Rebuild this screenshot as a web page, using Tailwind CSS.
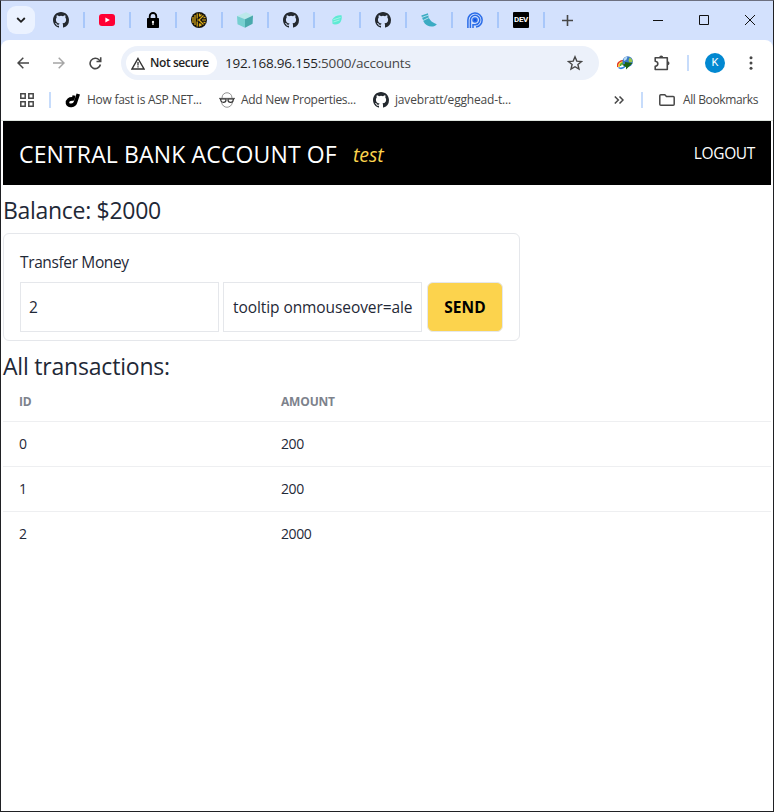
<!DOCTYPE html>
<html lang="en">
<head>
<meta charset="utf-8">
<title>Accounts</title>
<script src="https://cdn.jsdelivr.net/npm/@tailwindcss/browser@4"></script>
</head>
<body class="w-[774px] h-[812px] overflow-hidden bg-[#d3e1fd] font-['Open_Sans',sans-serif] text-[#1f2937]">
<svg class="hidden">
  <symbol id="github" viewBox="0 0 16 16"><path fill="#24292f" d="M8 0C3.58 0 0 3.58 0 8c0 3.54 2.29 6.53 5.47 7.59.4.07.55-.17.55-.38 0-.19-.01-.82-.01-1.49-2.01.37-2.53-.49-2.69-.94-.09-.23-.48-.94-.82-1.13-.28-.15-.68-.52-.01-.53.63-.01 1.08.58 1.23.82.72 1.21 1.87.87 2.33.66.07-.52.28-.87.51-1.07-1.78-.2-3.64-.89-3.64-3.95 0-.87.31-1.59.82-2.15-.08-.2-.36-1.02.08-2.12 0 0 .67-.21 2.2.82a7.6 7.6 0 0 1 4 0c1.53-1.04 2.2-.82 2.2-.82.44 1.1.16 1.92.08 2.12.51.56.82 1.27.82 2.15 0 3.07-1.87 3.75-3.65 3.95.29.25.54.73.54 1.48 0 1.07-.01 1.93-.01 2.2 0 .21.15.46.55.38A8.01 8.01 0 0 0 16 8c0-4.42-3.58-8-8-8z"/></symbol>
</svg>
<div class="flex h-full flex-col border border-[#202124] border-t-[#6d7080]">
  <!-- tab strip -->
  <div class="flex h-[39px] shrink-0 items-center pb-[1px] pl-[6px]">
    <div class="flex h-7 w-7 items-center justify-center rounded-[9px] bg-[#ebf2ff]"><svg class="h-[10px] w-[10px]" viewBox="0 0 10 10" fill="none" stroke="#1f1f1f" stroke-width="1.8"><path d="M1.2 3 5 6.8 8.8 3"/></svg></div>
    <div class="ml-[18px] w-[30px]"><svg class="h-4 w-4"><use href="#github"/></svg></div>
    <div class="flex items-center">
      <div class="flex w-[46px] items-center"><i class="h-4 w-[2px] bg-[#a8c7fa]"></i><svg class="ml-[14px] h-4 w-4" viewBox="0 0 16 16"><rect y="2" width="16" height="12" rx="3" fill="#f03"/><path d="M6.4 5.4v5.2L10.8 8z" fill="#fff"/></svg></div>
      <div class="flex w-[46px] items-center"><i class="h-4 w-[2px] bg-[#a8c7fa]"></i><svg class="ml-[14px] h-4 w-4" viewBox="0 0 16 16"><path d="M4.700 7V4.300a3.300 3.300 0 0 1 6.600 0V7" fill="none" stroke="#000" stroke-width="1.8"/><rect x="2" y="6" width="12" height="10" rx=".8"/><path d="M8 8.800a1.200 1.200 0 0 1 .6 2.200v2H7.400v-2A1.200 1.200 0 0 1 8 8.800z" fill="#fff"/></svg></div>
      <div class="flex w-[46px] items-center"><i class="h-4 w-[2px] bg-[#a8c7fa]"></i><svg class="ml-[14px] h-4 w-4" viewBox="0 0 16 16"><circle cx="8" cy="8" r="8" fill="#15130d"/><g fill="none" stroke="#dcab18" stroke-width="1.200"><path d="M2 5v6M4 3v10M6.200 1.500v5M6.200 9.500v5M6 8h2l4.500-4.500M8 8l4.500 4.500M8.500 4.500V1.500M8.500 4.500l2-2M8.500 11.500v3M8.500 11.500l2 2M11 8h4M12.500 6l2-1M12.500 10l2 1"/></g></svg></div>
      <div class="flex w-[46px] items-center"><i class="h-4 w-[2px] bg-[#a8c7fa]"></i><svg class="ml-[14px] h-4 w-4" viewBox="0 0 16 16"><path d="M0 4 9 .3l7 3.200-8 3.800z" fill="#bce9ea"/><path d="M0 4l8 3.300v8.500l-7.500-3.500z" fill="#76cfd0"/><path d="M16 3.500 8 7.300v8.500l7.600-4z" fill="#48a9ab"/></svg></div>
      <div class="flex w-[46px] items-center"><i class="h-4 w-[2px] bg-[#a8c7fa]"></i><svg class="ml-[14px] h-4 w-4"><use href="#github"/></svg></div>
      <div class="flex w-[46px] items-center"><i class="h-4 w-[2px] bg-[#a8c7fa]"></i><svg class="ml-[14px] h-4 w-4" viewBox="0 0 16 16"><path d="M3.300 7.500C5 4 9 2.800 12.500 3.200c.6 2.500.3 6-2.500 8.300-2 1-5 1.300-6.500.3z" fill="#5eead4"/><path d="M4.300 7.700 11.500 5.500M4.500 10l6-2" stroke="#b7f5ea" stroke-width=".8"/></svg></div>
      <div class="flex w-[46px] items-center"><i class="h-4 w-[2px] bg-[#a8c7fa]"></i><svg class="ml-[14px] h-4 w-4"><use href="#github"/></svg></div>
      <div class="flex w-[46px] items-center"><i class="h-4 w-[2px] bg-[#a8c7fa]"></i><svg class="ml-[14px] h-4 w-4" viewBox="0 0 16 16"><path d="M.3 3.500 7 1.300c.2 5 2.500 9 8.800 10.900C13.500 16 5 15.500 2.500 9.500z" fill="#3babc3"/><path d="M.8 5.500 7.200 3.200M2 8.500l5.800-2.800" stroke="#c0e2f2" stroke-width=".9"/></svg></div>
      <div class="flex w-[46px] items-center"><i class="h-4 w-[2px] bg-[#a8c7fa]"></i><svg class="ml-[14px] h-4 w-4" viewBox="0 0 16 16" fill="none" stroke="#2b6de8" stroke-width="1.500"><path d="M.9 16V8A7.100 7.100 0 1 1 9 15.100M3.400 16V8A4.700 4.700 0 1 1 8 12.700H6V16"/><circle cx="8" cy="8" r="2" fill="#1554e0"/></svg></div>
      <div class="flex w-[46px] items-center"><i class="h-4 w-[2px] bg-[#a8c7fa]"></i><span class="ml-[14px] flex h-4 w-4 items-center justify-center rounded-[1px] bg-black font-['Roboto',sans-serif] text-[8px] font-bold tracking-[-0.300px] text-white">DEV</span></div>
      <div class="flex w-[46px] items-center"><i class="h-4 w-[2px] bg-[#a8c7fa]"></i><svg class="ml-[17px] h-[11px] w-[11px]" viewBox="0 0 11 11" stroke="#474747" stroke-width="1.600"><path d="M5.500 0v11M0 5.500h11"/></svg></div>
    </div>
    <div class="ml-[64px] flex items-center gap-9">
      <svg class="h-[10px] w-[10px]" viewBox="0 0 10 10"><path d="M0 5.500h10" stroke="#111"/></svg>
      <svg class="h-[10px] w-[10px]" viewBox="0 0 10 10"><path d="M.5.5h9v9h-9z" fill="none" stroke="#111"/></svg>
      <svg class="h-[10px] w-[10px]" viewBox="0 0 10 10"><path d="M0 0l10 10M10 0 0 10" stroke="#111"/></svg>
    </div>
  </div>
  <div class="flex min-h-0 flex-1 flex-col rounded-t-[8px] bg-white">
    <!-- address bar -->
    <div class="flex h-[46px] shrink-0 items-center pl-[16px]">
      <svg class="h-3 w-3" viewBox="0 0 12 12" fill="none" stroke="#474747" stroke-width="1.500"><path d="M12 6H1M6.300.7 1 6l5.300 5.300"/></svg>
      <svg class="ml-6 h-3 w-3" viewBox="0 0 12 12" fill="none" stroke="#a5a5a5" stroke-width="1.500"><path d="M0 6h11M5.700.7 11 6l-5.300 5.300"/></svg>
      <svg class="ml-6 h-[13px] w-[13px]" viewBox="0 0 13 13" fill="none" stroke="#474747" stroke-width="1.600"><path d="M11.400 7.500A5.200 5.200 0 1 1 10.200 3L11.500 4.300"/><path d="M11.700.3v4.200H7.500"/></svg>
      <div class="ml-[19px] flex h-[34px] w-[478px] items-center rounded-full bg-[#ecf1fa] pl-[5px]">
        <div class="flex h-6 w-[91px] items-center rounded-full bg-white pl-[5px]">
          <svg class="h-[13px] w-[14px] shrink-0" viewBox="0 0 14 13"><path d="M7 1.500 13 12H1z" fill="none" stroke="#333" stroke-width="1.400"/><path d="M7 5v3.500M7 9.200v1.400" stroke="#333" stroke-width="1.300"/></svg>
          <span class="ml-[5px] whitespace-nowrap text-[12px] font-semibold tracking-[-0.420px] text-[#1f1f1f]">Not secure</span>
        </div>
        <span class="ml-[8px] whitespace-nowrap text-[13.500px] tracking-[-0.200px] text-[#1f1f1f]">192.168.96.155<span class="text-[#474747]">:5000/accounts</span></span>
        <svg class="mr-[16px] ml-auto h-4 w-4" viewBox="0 0 16 16"><path d="M8 1.800l1.800 4.300 4.700.4-3.600 3 1.100 4.600L8 11.700l-4 2.400 1.100-4.600-3.600-3 4.700-.4z" fill="none" stroke="#474747" stroke-width="1.400"/></svg>
      </div>
      <svg class="ml-[18px] h-4 w-4" viewBox="0 0 16 16"><path d="M.8 12C-.2 8 3 5.500 7 5.500" fill="none" stroke="#e43c22" stroke-width="1.600"/><path d="M2.200 12C1.500 9 4 7 7 7" fill="none" stroke="#f6c626" stroke-width="1.600"/><path d="M1.500 12.500c2 1.500 5 .5 7-1.500" fill="none" stroke="#2681dd" stroke-width="1.500"/><path d="M3.500 11C3.500 9 5 8 7 8" fill="none" stroke="#4caf35" stroke-width="1.500"/><circle cx="10.700" cy="6.500" r="5.200" fill="#3a79c7"/><path d="M6.500 5c.5-2.500 2.500-3.500 4-3.200L9.500 4.500l-2 1.500z" fill="#b9dcf5"/><path d="M12.500 2.500c2 .5 3 2.500 3 4.500l-3 .5-1-2z" fill="#9bc84c"/><path d="M4.500 9.500 8 9V7l7.500 1L9 14.500V12z" fill="#1d6415"/></svg>
      <svg class="ml-[21px] h-4 w-4" viewBox="0 0 16 16"><path d="M1.200 2.800h12.100v11.700H1.200v-3.300c3.500-.5 3.500-4.500 0-5z" fill="none" stroke="#474747" stroke-width="1.600" stroke-linejoin="round"/><path d="M5.200 2.500a2 2 0 0 1 4 0zM13.500 6.300a2 2 0 0 1 0 4z" fill="#474747"/></svg>
      <i class="ml-[17px] h-4 w-[2px] bg-[#c7dcfb]"></i>
      <span class="ml-[16px] flex h-5 w-5 items-center justify-center rounded-full bg-[#0288d1] font-['Roboto',sans-serif] text-[11px] text-white">K</span>
      <svg class="ml-[24px] h-[14px] w-1" viewBox="0 0 4 14" fill="#474747"><circle cx="2" cy="1.700" r="1.500"/><circle cx="2" cy="7" r="1.500"/><circle cx="2" cy="12.300" r="1.500"/></svg>
    </div>
    <!-- bookmarks bar -->
    <div class="flex h-[35px] shrink-0 items-center border-b border-[#dfe5df] pb-[6px] pl-[19px] text-[12px] text-[#474747]">
      <svg class="h-[14px] w-[14px]" viewBox="0 0 14 14" fill="none" stroke="#474747" stroke-width="1.500"><path d="M.8.8h4.400v4.400H.8zM8.800.8h4.400v4.400H8.800zM.8 8.800h4.400v4.400H.8zM8.800 8.800h4.400v4.400H8.800z"/></svg>
      <i class="ml-[15px] h-4 w-[2px] bg-[#c7dcfb]"></i>
      <svg class="ml-[14px] h-4 w-4" viewBox="0 0 16 16" fill="none" stroke="#000"><path d="M9 3.500 7.800 8.500" stroke-width="3"/><path d="M13.300 2 10.500 10.200C9.500 14 3.500 14.500 2.500 11.300 2 8.500 4.500 6.500 8 7" stroke-width="3.600"/></svg>
      <span class="ml-[6px] w-[116px] whitespace-nowrap tracking-[-0.270px]">How fast is ASP.NET...</span>
      <svg class="ml-[16px] h-4 w-4" viewBox="0 0 16 16" fill="none" stroke="#777"><path d="M3 6C3-1 13-1 13 6M2.500 10c1 7 10 7 11 0" stroke-width=".8"/><path d="M0 6.500h16" stroke-width="1.300"/><path d="M1.500 7h5.500v1a2.600 2.300 0 0 1-5.200 0zM9 7h5.500l-.3 1a2.600 2.300 0 0 1-5.200 0z" stroke="#333" stroke-width="1.200"/></svg>
      <span class="ml-[6px] w-[116px] whitespace-nowrap tracking-[-0.300px]">Add New Properties...</span>
      <svg class="ml-[16px] h-4 w-4"><use href="#github"/></svg>
      <span class="ml-[6px] w-[117px] whitespace-nowrap tracking-[-0.170px]">javebratt/egghead-t...</span>
      <svg class="ml-[102px] h-2 w-[10px]" viewBox="0 0 10 8" fill="none" stroke="#474747" stroke-width="1.500"><path d="M.8.500 4.300 4 .8 7.500M5.500.500 9 4 5.500 7.500"/></svg>
      <i class="ml-[17px] h-4 w-[2px] bg-[#c7dcfb]"></i>
      <svg class="ml-[16px] h-3 w-4" viewBox="0 0 16 12" fill="none" stroke="#474747" stroke-width="1.500"><path d="M.8 1.800q0-1 1-1h4L7.500 2.500h6.700q1 0 1 1v6.700q0 1-1 1H1.800q-1 0-1-1z"/></svg>
      <span class="ml-[8px] whitespace-nowrap tracking-[-0.380px]">All Bookmarks</span>
    </div>
    <!-- page -->
    <main class="flex flex-col px-[2px]">
      <nav class="flex h-16 items-center bg-black px-4 text-white">
        <h1 class="w-[317px] whitespace-nowrap pt-[3px] text-[23px] tracking-[0.140px]">CENTRAL BANK ACCOUNT OF</h1>
        <em class="ml-[17px] pt-[3px] text-[19.500px] tracking-[-0.100px] text-[#fcd34d]">test</em>
        <a class="ml-auto pt-[2px] text-[15.500px] tracking-[-0.350px]">LOGOUT</a>
      </nav>
      <h2 class="mt-[9px] h-8 text-[23px] leading-8 tracking-[-0.300px]">Balance: $2000</h2>
      <form class="mt-[7px] flex h-[108px] w-[517px] flex-col rounded-[6px] border border-[#e5e7eb] px-4 pt-4">
        <label class="text-[15.500px] leading-6 tracking-[-0.370px]">Transfer Money</label>
        <div class="mt-2 flex">
          <input class="h-[50px] w-[199px] border border-[#e5e7eb] px-2 text-[15.500px] tracking-[-0.100px]" value="2">
          <input class="ml-1 h-[50px] w-[199px] border border-[#e5e7eb] px-2 pl-[9px] text-[15.500px] tracking-[-0.080px]" value="tooltip onmouseover=alert(1)">
          <button type="button" class="ml-[5px] h-[50px] w-[76px] rounded-[6px] border border-[#e5e7eb] bg-[#fcd34d] pt-[2px] text-[15.500px] font-bold tracking-[0.100px] text-black">SEND</button>
        </div>
      </form>
      <h2 class="mt-[9px] h-8 text-[23px] leading-8 tracking-[-0.200px]">All transactions:</h2>
      <div class="mt-px text-[14px] tracking-[-0.400px]">
        <div class="grid h-[39px] grid-cols-[262px_1fr] items-center border-b border-[#eeeff1] px-4 text-[12px] font-bold tracking-[-0.170px] text-[#7d828c]"><span>ID</span><span>AMOUNT</span></div>
        <div class="grid h-[45px] grid-cols-[262px_1fr] items-center border-b border-[#eeeff1] px-4 pb-[2px]"><span>0</span><span>200</span></div>
        <div class="grid h-[45px] grid-cols-[262px_1fr] items-center border-b border-[#eeeff1] px-4 pb-[2px]"><span>1</span><span>200</span></div>
        <div class="grid h-[45px] grid-cols-[262px_1fr] items-center px-4 pb-[3px]"><span>2</span><span>2000</span></div>
      </div>
    </main>
  </div>
</div>
</body>
</html>
